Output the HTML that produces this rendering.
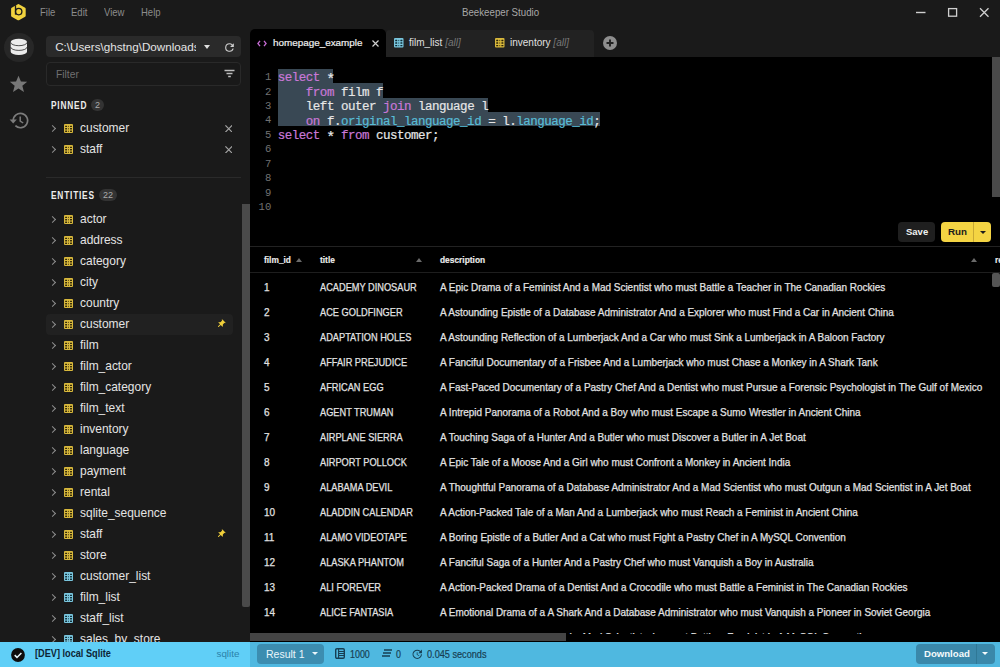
<!DOCTYPE html>
<html><head><meta charset="utf-8"><style>
*{margin:0;padding:0;box-sizing:border-box}
html,body{width:1000px;height:667px;overflow:hidden;background:#1a1a1a;font-family:"Liberation Sans",sans-serif;color:#e6e6e6}
.a{position:absolute}
.nw{white-space:nowrap}
.menu{top:7.2px;font-size:10.4px;color:#8c8c8c;position:absolute;white-space:nowrap;transform:scaleX(0.915);transform-origin:0 0}
.hdr{position:absolute;font-size:10.4px;font-weight:700;letter-spacing:1px;transform:scaleX(0.8);transform-origin:0 0;color:#ececec;white-space:nowrap}
.badge{position:absolute;background:#333;color:#aaa;border-radius:7px;font-size:9px;text-align:center;height:12px;line-height:12px}
.item{position:absolute;left:46px;width:187px;height:21px}
.chev{position:absolute;left:4px;top:8px;width:5px;height:5px;border-right:1.5px solid #8e8e8e;border-bottom:1.5px solid #8e8e8e;transform:rotate(-45deg)}
.ic{position:absolute;left:18px;top:5.5px}
.tx{position:absolute;left:34px;top:2.9px;font-size:12.4px;color:#e4e4e4;white-space:nowrap;transform:scaleX(0.965);transform-origin:0 0}
.code{position:absolute;font-family:"Liberation Mono",monospace;font-size:12.5px;letter-spacing:-0.49px;line-height:15.45px;white-space:pre}
.ln{left:250px;width:21.3px;text-align:right;color:#727272;font-size:10.6px !important;letter-spacing:0 !important}
.kw{color:#c978d8;-webkit-text-stroke:0.2px #c978d8}
.pr{color:#58bcd6;-webkit-text-stroke:0.2px #58bcd6}
.id{color:#e6e6e6;-webkit-text-stroke:0.2px #e6e6e6}
.ast{display:inline-block;transform:translateY(3px) scale(1.2)}
.sel{position:absolute;background:#394854}
.th{position:absolute;font-size:9px;font-weight:700;color:#ececec;-webkit-text-stroke:0.15px #ececec;top:8.8px;white-space:nowrap;transform:scaleX(0.93);transform-origin:0 0}
.row{position:absolute;left:0;width:750px;height:25px;font-size:10.6px;color:#e2e2e2}
.row span{position:absolute;top:7.8px;white-space:nowrap;-webkit-text-stroke:0.25px #e2e2e2;transform:scaleX(0.94);transform-origin:0 0}
.sarrow{position:absolute;width:0;height:0;border-left:3px solid transparent;border-right:3px solid transparent;border-bottom:4px solid #6a6a6a}
</style></head><body>
<div class="a" style="left:0;top:0;width:1000px;height:29px;background:#1a1a1a"></div>
<svg class="a" style="left:10px;top:4px" width="17" height="17" viewBox="0 0 17 17">
<polygon points="8.4,1.2 14.6,4.7 14.6,11.7 8.4,15.2 2.2,11.7 2.2,4.7" fill="#f0d23e" stroke="#f0d23e" stroke-width="2.2" stroke-linejoin="round"/>
<path d="M5.5 1.2 V10.6" stroke="#1a1a1a" stroke-width="1.3"/>
<circle cx="8.7" cy="7.6" r="3.2" fill="none" stroke="#1a1a1a" stroke-width="1.3"/></svg>
<div class="menu" style="left:40px">File</div>
<div class="menu" style="left:71px">Edit</div>
<div class="menu" style="left:104px">View</div>
<div class="menu" style="left:141px">Help</div>
<div class="a nw" style="left:461.8px;top:5.6px;font-size:10.6px;color:#a8a8a8;transform:scaleX(0.915);transform-origin:0 0">Beekeeper Studio</div>
<svg class="a" style="left:910px;top:4px" width="85" height="18" viewBox="0 0 85 18">
<path d="M6 8.5 H15.5" stroke="#cfcfcf" stroke-width="1.4"/>
<rect x="38.6" y="4.6" width="8" height="7.6" fill="none" stroke="#cfcfcf" stroke-width="1.3"/>
<path d="M70 4.3 L78.5 12.8 M78.5 4.3 L70 12.8" stroke="#cfcfcf" stroke-width="1.3"/></svg>
<div class="a" style="left:4px;top:32.5px;width:29.5px;height:29.5px;border-radius:50%;background:#272727"></div>
<svg class="a" style="left:10px;top:38px" width="18" height="18" viewBox="0 0 18 18">
<path d="M0.7 4 A8.15 3.3 0 0 1 17 4 V13.7 A8.15 3.3 0 0 1 0.7 13.7 Z" fill="#ececec"/>
<path d="M0.7 4.4 A8.15 3.3 0 0 0 17 4.4 M0.7 9.1 A8.15 3.3 0 0 0 17 9.1" fill="none" stroke="#262626" stroke-width="0.8"/></svg>
<svg class="a" style="left:9px;top:75px" width="19" height="18" viewBox="0 0 24 23">
<path d="M12 0.8 L15.1 8.2 L23.1 8.6 L16.9 13.8 L19 21.6 L12 17.2 L5 21.6 L7.1 13.8 L0.9 8.6 L8.9 8.2Z" fill="#777"/></svg>
<svg class="a" style="left:8px;top:111px" width="21" height="19" viewBox="0 0 21 19">
<path d="M5.2 9.5 A7.2 7.2 0 1 1 7.4 14.7" fill="none" stroke="#7c7c7c" stroke-width="1.7"/>
<path d="M1.6 8.6 L5.2 12.6 L8.8 8.6 Z" fill="#7c7c7c"/>
<path d="M12.2 5.6 V10 L15.2 12" fill="none" stroke="#7c7c7c" stroke-width="1.5"/></svg>
<div class="a" style="left:46px;top:36px;width:195px;height:21.2px;background:#2a2a2a;border-radius:4px;overflow:hidden"><div class="a nw" style="left:9.2px;top:3.7px;width:141px;overflow:hidden;font-size:11.65px;color:#e4e4e4">C:\Users\ghstng\Downloads\sakila.db</div></div>
<div class="a" style="left:204px;top:45px;width:0;height:0;border-left:3.5px solid transparent;border-right:3.5px solid transparent;border-top:4px solid #e0e0e0"></div>
<svg class="a" style="left:223px;top:40.5px" width="13" height="13" viewBox="0 0 24 24">
<path d="M17.65 6.35A7.96 7.96 0 0 0 12 4a8 8 0 1 0 7.73 10h-2.08A6 6 0 1 1 12 6c1.66 0 3.14.69 4.22 1.78L13 11h7V4l-2.35 2.35z" fill="#cfcfcf"/></svg>
<div class="a" style="left:46px;top:62px;width:195px;height:24px;border:1px solid #292929;border-radius:4px;background:#191919"></div>
<div class="a nw" style="left:56px;top:67.9px;font-size:10.8px;color:#707070;transform:scaleX(0.95);transform-origin:0 0">Filter</div>
<svg class="a" style="left:224px;top:69px" width="11" height="10" viewBox="0 0 11 10">
<path d="M0.5 1.5 H10.5 M2.5 4.5 H8.5 M4.2 7.5 H6.8" stroke="#bdbdbd" stroke-width="1.3"/></svg>
<div class="hdr" style="left:51px;top:99.9px">PINNED</div>
<div class="badge" style="left:91px;top:99px;width:13px">2</div>
<div class="item" style="top:118px"><div class="chev"></div><svg class="ic" width="9" height="10" viewBox="0 0 9 10" preserveAspectRatio="none"><rect x="0" y="0" width="9" height="9" rx="1" fill="#d8b83c"/><rect x="1.1" y="1.7" width="2.0" height="1.3" rx="0.4" fill="#2b2306"/><rect x="1.1" y="4.1" width="2.0" height="1.3" rx="0.4" fill="#2b2306"/><rect x="1.1" y="6.6" width="2.0" height="1.3" rx="0.4" fill="#2b2306"/><rect x="4.15" y="1.7" width="0.8" height="1.3" rx="0.4" fill="#2b2306"/><rect x="4.15" y="4.1" width="0.8" height="1.3" rx="0.4" fill="#2b2306"/><rect x="4.15" y="6.6" width="0.8" height="1.3" rx="0.4" fill="#2b2306"/><rect x="6.0" y="1.7" width="2.0" height="1.3" rx="0.4" fill="#2b2306"/><rect x="6.0" y="4.1" width="2.0" height="1.3" rx="0.4" fill="#2b2306"/><rect x="6.0" y="6.6" width="2.0" height="1.3" rx="0.4" fill="#2b2306"/></svg><div class="tx">customer</div><svg style="position:absolute;left:178.9px;top:6.5px" width="7.5" height="7.5" viewBox="0 0 7.5 7.5"><path d="M0.4 0.4 L7.1 7.1 M7.1 0.4 L0.4 7.1" stroke="#a4a4a4" stroke-width="1.2"/></svg></div>
<div class="item" style="top:139px"><div class="chev"></div><svg class="ic" width="9" height="10" viewBox="0 0 9 10" preserveAspectRatio="none"><rect x="0" y="0" width="9" height="9" rx="1" fill="#d8b83c"/><rect x="1.1" y="1.7" width="2.0" height="1.3" rx="0.4" fill="#2b2306"/><rect x="1.1" y="4.1" width="2.0" height="1.3" rx="0.4" fill="#2b2306"/><rect x="1.1" y="6.6" width="2.0" height="1.3" rx="0.4" fill="#2b2306"/><rect x="4.15" y="1.7" width="0.8" height="1.3" rx="0.4" fill="#2b2306"/><rect x="4.15" y="4.1" width="0.8" height="1.3" rx="0.4" fill="#2b2306"/><rect x="4.15" y="6.6" width="0.8" height="1.3" rx="0.4" fill="#2b2306"/><rect x="6.0" y="1.7" width="2.0" height="1.3" rx="0.4" fill="#2b2306"/><rect x="6.0" y="4.1" width="2.0" height="1.3" rx="0.4" fill="#2b2306"/><rect x="6.0" y="6.6" width="2.0" height="1.3" rx="0.4" fill="#2b2306"/></svg><div class="tx">staff</div><svg style="position:absolute;left:178.9px;top:6.5px" width="7.5" height="7.5" viewBox="0 0 7.5 7.5"><path d="M0.4 0.4 L7.1 7.1 M7.1 0.4 L0.4 7.1" stroke="#a4a4a4" stroke-width="1.2"/></svg></div>
<div class="a" style="left:46px;top:177px;width:195px;height:1px;background:#2a2a2a"></div>
<div class="hdr" style="left:51px;top:189.5px">ENTITIES</div>
<div class="badge" style="left:99px;top:189px;width:18px">22</div>
<div class="item" style="top:209px"><div class="chev"></div><svg class="ic" width="9" height="10" viewBox="0 0 9 10" preserveAspectRatio="none"><rect x="0" y="0" width="9" height="9" rx="1" fill="#d8b83c"/><rect x="1.1" y="1.7" width="2.0" height="1.3" rx="0.4" fill="#2b2306"/><rect x="1.1" y="4.1" width="2.0" height="1.3" rx="0.4" fill="#2b2306"/><rect x="1.1" y="6.6" width="2.0" height="1.3" rx="0.4" fill="#2b2306"/><rect x="4.15" y="1.7" width="0.8" height="1.3" rx="0.4" fill="#2b2306"/><rect x="4.15" y="4.1" width="0.8" height="1.3" rx="0.4" fill="#2b2306"/><rect x="4.15" y="6.6" width="0.8" height="1.3" rx="0.4" fill="#2b2306"/><rect x="6.0" y="1.7" width="2.0" height="1.3" rx="0.4" fill="#2b2306"/><rect x="6.0" y="4.1" width="2.0" height="1.3" rx="0.4" fill="#2b2306"/><rect x="6.0" y="6.6" width="2.0" height="1.3" rx="0.4" fill="#2b2306"/></svg><div class="tx">actor</div></div>
<div class="item" style="top:230px"><div class="chev"></div><svg class="ic" width="9" height="10" viewBox="0 0 9 10" preserveAspectRatio="none"><rect x="0" y="0" width="9" height="9" rx="1" fill="#d8b83c"/><rect x="1.1" y="1.7" width="2.0" height="1.3" rx="0.4" fill="#2b2306"/><rect x="1.1" y="4.1" width="2.0" height="1.3" rx="0.4" fill="#2b2306"/><rect x="1.1" y="6.6" width="2.0" height="1.3" rx="0.4" fill="#2b2306"/><rect x="4.15" y="1.7" width="0.8" height="1.3" rx="0.4" fill="#2b2306"/><rect x="4.15" y="4.1" width="0.8" height="1.3" rx="0.4" fill="#2b2306"/><rect x="4.15" y="6.6" width="0.8" height="1.3" rx="0.4" fill="#2b2306"/><rect x="6.0" y="1.7" width="2.0" height="1.3" rx="0.4" fill="#2b2306"/><rect x="6.0" y="4.1" width="2.0" height="1.3" rx="0.4" fill="#2b2306"/><rect x="6.0" y="6.6" width="2.0" height="1.3" rx="0.4" fill="#2b2306"/></svg><div class="tx">address</div></div>
<div class="item" style="top:251px"><div class="chev"></div><svg class="ic" width="9" height="10" viewBox="0 0 9 10" preserveAspectRatio="none"><rect x="0" y="0" width="9" height="9" rx="1" fill="#d8b83c"/><rect x="1.1" y="1.7" width="2.0" height="1.3" rx="0.4" fill="#2b2306"/><rect x="1.1" y="4.1" width="2.0" height="1.3" rx="0.4" fill="#2b2306"/><rect x="1.1" y="6.6" width="2.0" height="1.3" rx="0.4" fill="#2b2306"/><rect x="4.15" y="1.7" width="0.8" height="1.3" rx="0.4" fill="#2b2306"/><rect x="4.15" y="4.1" width="0.8" height="1.3" rx="0.4" fill="#2b2306"/><rect x="4.15" y="6.6" width="0.8" height="1.3" rx="0.4" fill="#2b2306"/><rect x="6.0" y="1.7" width="2.0" height="1.3" rx="0.4" fill="#2b2306"/><rect x="6.0" y="4.1" width="2.0" height="1.3" rx="0.4" fill="#2b2306"/><rect x="6.0" y="6.6" width="2.0" height="1.3" rx="0.4" fill="#2b2306"/></svg><div class="tx">category</div></div>
<div class="item" style="top:272px"><div class="chev"></div><svg class="ic" width="9" height="10" viewBox="0 0 9 10" preserveAspectRatio="none"><rect x="0" y="0" width="9" height="9" rx="1" fill="#d8b83c"/><rect x="1.1" y="1.7" width="2.0" height="1.3" rx="0.4" fill="#2b2306"/><rect x="1.1" y="4.1" width="2.0" height="1.3" rx="0.4" fill="#2b2306"/><rect x="1.1" y="6.6" width="2.0" height="1.3" rx="0.4" fill="#2b2306"/><rect x="4.15" y="1.7" width="0.8" height="1.3" rx="0.4" fill="#2b2306"/><rect x="4.15" y="4.1" width="0.8" height="1.3" rx="0.4" fill="#2b2306"/><rect x="4.15" y="6.6" width="0.8" height="1.3" rx="0.4" fill="#2b2306"/><rect x="6.0" y="1.7" width="2.0" height="1.3" rx="0.4" fill="#2b2306"/><rect x="6.0" y="4.1" width="2.0" height="1.3" rx="0.4" fill="#2b2306"/><rect x="6.0" y="6.6" width="2.0" height="1.3" rx="0.4" fill="#2b2306"/></svg><div class="tx">city</div></div>
<div class="item" style="top:293px"><div class="chev"></div><svg class="ic" width="9" height="10" viewBox="0 0 9 10" preserveAspectRatio="none"><rect x="0" y="0" width="9" height="9" rx="1" fill="#d8b83c"/><rect x="1.1" y="1.7" width="2.0" height="1.3" rx="0.4" fill="#2b2306"/><rect x="1.1" y="4.1" width="2.0" height="1.3" rx="0.4" fill="#2b2306"/><rect x="1.1" y="6.6" width="2.0" height="1.3" rx="0.4" fill="#2b2306"/><rect x="4.15" y="1.7" width="0.8" height="1.3" rx="0.4" fill="#2b2306"/><rect x="4.15" y="4.1" width="0.8" height="1.3" rx="0.4" fill="#2b2306"/><rect x="4.15" y="6.6" width="0.8" height="1.3" rx="0.4" fill="#2b2306"/><rect x="6.0" y="1.7" width="2.0" height="1.3" rx="0.4" fill="#2b2306"/><rect x="6.0" y="4.1" width="2.0" height="1.3" rx="0.4" fill="#2b2306"/><rect x="6.0" y="6.6" width="2.0" height="1.3" rx="0.4" fill="#2b2306"/></svg><div class="tx">country</div></div>
<div class="item" style="top:314px;background:#212121;border-radius:4px"><div class="chev"></div><svg class="ic" width="9" height="10" viewBox="0 0 9 10" preserveAspectRatio="none"><rect x="0" y="0" width="9" height="9" rx="1" fill="#d8b83c"/><rect x="1.1" y="1.7" width="2.0" height="1.3" rx="0.4" fill="#2b2306"/><rect x="1.1" y="4.1" width="2.0" height="1.3" rx="0.4" fill="#2b2306"/><rect x="1.1" y="6.6" width="2.0" height="1.3" rx="0.4" fill="#2b2306"/><rect x="4.15" y="1.7" width="0.8" height="1.3" rx="0.4" fill="#2b2306"/><rect x="4.15" y="4.1" width="0.8" height="1.3" rx="0.4" fill="#2b2306"/><rect x="4.15" y="6.6" width="0.8" height="1.3" rx="0.4" fill="#2b2306"/><rect x="6.0" y="1.7" width="2.0" height="1.3" rx="0.4" fill="#2b2306"/><rect x="6.0" y="4.1" width="2.0" height="1.3" rx="0.4" fill="#2b2306"/><rect x="6.0" y="6.6" width="2.0" height="1.3" rx="0.4" fill="#2b2306"/></svg><div class="tx">customer</div><svg style="position:absolute;left:170px;top:5px" width="10" height="10" viewBox="0 0 24 24"><path d="M16 9V4h1c.55 0 1-.45 1-1s-.45-1-1-1H7c-.55 0-1 .45-1 1s.45 1 1 1h1v5c0 1.66-1.34 3-3 3v2h5.97v7l1 1 1-1v-7H19v-2c-1.66 0-3-1.34-3-3z" fill="#f0cf3a" transform="rotate(45 12 12)"/></svg></div>
<div class="item" style="top:335px"><div class="chev"></div><svg class="ic" width="9" height="10" viewBox="0 0 9 10" preserveAspectRatio="none"><rect x="0" y="0" width="9" height="9" rx="1" fill="#d8b83c"/><rect x="1.1" y="1.7" width="2.0" height="1.3" rx="0.4" fill="#2b2306"/><rect x="1.1" y="4.1" width="2.0" height="1.3" rx="0.4" fill="#2b2306"/><rect x="1.1" y="6.6" width="2.0" height="1.3" rx="0.4" fill="#2b2306"/><rect x="4.15" y="1.7" width="0.8" height="1.3" rx="0.4" fill="#2b2306"/><rect x="4.15" y="4.1" width="0.8" height="1.3" rx="0.4" fill="#2b2306"/><rect x="4.15" y="6.6" width="0.8" height="1.3" rx="0.4" fill="#2b2306"/><rect x="6.0" y="1.7" width="2.0" height="1.3" rx="0.4" fill="#2b2306"/><rect x="6.0" y="4.1" width="2.0" height="1.3" rx="0.4" fill="#2b2306"/><rect x="6.0" y="6.6" width="2.0" height="1.3" rx="0.4" fill="#2b2306"/></svg><div class="tx">film</div></div>
<div class="item" style="top:356px"><div class="chev"></div><svg class="ic" width="9" height="10" viewBox="0 0 9 10" preserveAspectRatio="none"><rect x="0" y="0" width="9" height="9" rx="1" fill="#d8b83c"/><rect x="1.1" y="1.7" width="2.0" height="1.3" rx="0.4" fill="#2b2306"/><rect x="1.1" y="4.1" width="2.0" height="1.3" rx="0.4" fill="#2b2306"/><rect x="1.1" y="6.6" width="2.0" height="1.3" rx="0.4" fill="#2b2306"/><rect x="4.15" y="1.7" width="0.8" height="1.3" rx="0.4" fill="#2b2306"/><rect x="4.15" y="4.1" width="0.8" height="1.3" rx="0.4" fill="#2b2306"/><rect x="4.15" y="6.6" width="0.8" height="1.3" rx="0.4" fill="#2b2306"/><rect x="6.0" y="1.7" width="2.0" height="1.3" rx="0.4" fill="#2b2306"/><rect x="6.0" y="4.1" width="2.0" height="1.3" rx="0.4" fill="#2b2306"/><rect x="6.0" y="6.6" width="2.0" height="1.3" rx="0.4" fill="#2b2306"/></svg><div class="tx">film_actor</div></div>
<div class="item" style="top:377px"><div class="chev"></div><svg class="ic" width="9" height="10" viewBox="0 0 9 10" preserveAspectRatio="none"><rect x="0" y="0" width="9" height="9" rx="1" fill="#d8b83c"/><rect x="1.1" y="1.7" width="2.0" height="1.3" rx="0.4" fill="#2b2306"/><rect x="1.1" y="4.1" width="2.0" height="1.3" rx="0.4" fill="#2b2306"/><rect x="1.1" y="6.6" width="2.0" height="1.3" rx="0.4" fill="#2b2306"/><rect x="4.15" y="1.7" width="0.8" height="1.3" rx="0.4" fill="#2b2306"/><rect x="4.15" y="4.1" width="0.8" height="1.3" rx="0.4" fill="#2b2306"/><rect x="4.15" y="6.6" width="0.8" height="1.3" rx="0.4" fill="#2b2306"/><rect x="6.0" y="1.7" width="2.0" height="1.3" rx="0.4" fill="#2b2306"/><rect x="6.0" y="4.1" width="2.0" height="1.3" rx="0.4" fill="#2b2306"/><rect x="6.0" y="6.6" width="2.0" height="1.3" rx="0.4" fill="#2b2306"/></svg><div class="tx">film_category</div></div>
<div class="item" style="top:398px"><div class="chev"></div><svg class="ic" width="9" height="10" viewBox="0 0 9 10" preserveAspectRatio="none"><rect x="0" y="0" width="9" height="9" rx="1" fill="#d8b83c"/><rect x="1.1" y="1.7" width="2.0" height="1.3" rx="0.4" fill="#2b2306"/><rect x="1.1" y="4.1" width="2.0" height="1.3" rx="0.4" fill="#2b2306"/><rect x="1.1" y="6.6" width="2.0" height="1.3" rx="0.4" fill="#2b2306"/><rect x="4.15" y="1.7" width="0.8" height="1.3" rx="0.4" fill="#2b2306"/><rect x="4.15" y="4.1" width="0.8" height="1.3" rx="0.4" fill="#2b2306"/><rect x="4.15" y="6.6" width="0.8" height="1.3" rx="0.4" fill="#2b2306"/><rect x="6.0" y="1.7" width="2.0" height="1.3" rx="0.4" fill="#2b2306"/><rect x="6.0" y="4.1" width="2.0" height="1.3" rx="0.4" fill="#2b2306"/><rect x="6.0" y="6.6" width="2.0" height="1.3" rx="0.4" fill="#2b2306"/></svg><div class="tx">film_text</div></div>
<div class="item" style="top:419px"><div class="chev"></div><svg class="ic" width="9" height="10" viewBox="0 0 9 10" preserveAspectRatio="none"><rect x="0" y="0" width="9" height="9" rx="1" fill="#d8b83c"/><rect x="1.1" y="1.7" width="2.0" height="1.3" rx="0.4" fill="#2b2306"/><rect x="1.1" y="4.1" width="2.0" height="1.3" rx="0.4" fill="#2b2306"/><rect x="1.1" y="6.6" width="2.0" height="1.3" rx="0.4" fill="#2b2306"/><rect x="4.15" y="1.7" width="0.8" height="1.3" rx="0.4" fill="#2b2306"/><rect x="4.15" y="4.1" width="0.8" height="1.3" rx="0.4" fill="#2b2306"/><rect x="4.15" y="6.6" width="0.8" height="1.3" rx="0.4" fill="#2b2306"/><rect x="6.0" y="1.7" width="2.0" height="1.3" rx="0.4" fill="#2b2306"/><rect x="6.0" y="4.1" width="2.0" height="1.3" rx="0.4" fill="#2b2306"/><rect x="6.0" y="6.6" width="2.0" height="1.3" rx="0.4" fill="#2b2306"/></svg><div class="tx">inventory</div></div>
<div class="item" style="top:440px"><div class="chev"></div><svg class="ic" width="9" height="10" viewBox="0 0 9 10" preserveAspectRatio="none"><rect x="0" y="0" width="9" height="9" rx="1" fill="#d8b83c"/><rect x="1.1" y="1.7" width="2.0" height="1.3" rx="0.4" fill="#2b2306"/><rect x="1.1" y="4.1" width="2.0" height="1.3" rx="0.4" fill="#2b2306"/><rect x="1.1" y="6.6" width="2.0" height="1.3" rx="0.4" fill="#2b2306"/><rect x="4.15" y="1.7" width="0.8" height="1.3" rx="0.4" fill="#2b2306"/><rect x="4.15" y="4.1" width="0.8" height="1.3" rx="0.4" fill="#2b2306"/><rect x="4.15" y="6.6" width="0.8" height="1.3" rx="0.4" fill="#2b2306"/><rect x="6.0" y="1.7" width="2.0" height="1.3" rx="0.4" fill="#2b2306"/><rect x="6.0" y="4.1" width="2.0" height="1.3" rx="0.4" fill="#2b2306"/><rect x="6.0" y="6.6" width="2.0" height="1.3" rx="0.4" fill="#2b2306"/></svg><div class="tx">language</div></div>
<div class="item" style="top:461px"><div class="chev"></div><svg class="ic" width="9" height="10" viewBox="0 0 9 10" preserveAspectRatio="none"><rect x="0" y="0" width="9" height="9" rx="1" fill="#d8b83c"/><rect x="1.1" y="1.7" width="2.0" height="1.3" rx="0.4" fill="#2b2306"/><rect x="1.1" y="4.1" width="2.0" height="1.3" rx="0.4" fill="#2b2306"/><rect x="1.1" y="6.6" width="2.0" height="1.3" rx="0.4" fill="#2b2306"/><rect x="4.15" y="1.7" width="0.8" height="1.3" rx="0.4" fill="#2b2306"/><rect x="4.15" y="4.1" width="0.8" height="1.3" rx="0.4" fill="#2b2306"/><rect x="4.15" y="6.6" width="0.8" height="1.3" rx="0.4" fill="#2b2306"/><rect x="6.0" y="1.7" width="2.0" height="1.3" rx="0.4" fill="#2b2306"/><rect x="6.0" y="4.1" width="2.0" height="1.3" rx="0.4" fill="#2b2306"/><rect x="6.0" y="6.6" width="2.0" height="1.3" rx="0.4" fill="#2b2306"/></svg><div class="tx">payment</div></div>
<div class="item" style="top:482px"><div class="chev"></div><svg class="ic" width="9" height="10" viewBox="0 0 9 10" preserveAspectRatio="none"><rect x="0" y="0" width="9" height="9" rx="1" fill="#d8b83c"/><rect x="1.1" y="1.7" width="2.0" height="1.3" rx="0.4" fill="#2b2306"/><rect x="1.1" y="4.1" width="2.0" height="1.3" rx="0.4" fill="#2b2306"/><rect x="1.1" y="6.6" width="2.0" height="1.3" rx="0.4" fill="#2b2306"/><rect x="4.15" y="1.7" width="0.8" height="1.3" rx="0.4" fill="#2b2306"/><rect x="4.15" y="4.1" width="0.8" height="1.3" rx="0.4" fill="#2b2306"/><rect x="4.15" y="6.6" width="0.8" height="1.3" rx="0.4" fill="#2b2306"/><rect x="6.0" y="1.7" width="2.0" height="1.3" rx="0.4" fill="#2b2306"/><rect x="6.0" y="4.1" width="2.0" height="1.3" rx="0.4" fill="#2b2306"/><rect x="6.0" y="6.6" width="2.0" height="1.3" rx="0.4" fill="#2b2306"/></svg><div class="tx">rental</div></div>
<div class="item" style="top:503px"><div class="chev"></div><svg class="ic" width="9" height="10" viewBox="0 0 9 10" preserveAspectRatio="none"><rect x="0" y="0" width="9" height="9" rx="1" fill="#d8b83c"/><rect x="1.1" y="1.7" width="2.0" height="1.3" rx="0.4" fill="#2b2306"/><rect x="1.1" y="4.1" width="2.0" height="1.3" rx="0.4" fill="#2b2306"/><rect x="1.1" y="6.6" width="2.0" height="1.3" rx="0.4" fill="#2b2306"/><rect x="4.15" y="1.7" width="0.8" height="1.3" rx="0.4" fill="#2b2306"/><rect x="4.15" y="4.1" width="0.8" height="1.3" rx="0.4" fill="#2b2306"/><rect x="4.15" y="6.6" width="0.8" height="1.3" rx="0.4" fill="#2b2306"/><rect x="6.0" y="1.7" width="2.0" height="1.3" rx="0.4" fill="#2b2306"/><rect x="6.0" y="4.1" width="2.0" height="1.3" rx="0.4" fill="#2b2306"/><rect x="6.0" y="6.6" width="2.0" height="1.3" rx="0.4" fill="#2b2306"/></svg><div class="tx">sqlite_sequence</div></div>
<div class="item" style="top:524px"><div class="chev"></div><svg class="ic" width="9" height="10" viewBox="0 0 9 10" preserveAspectRatio="none"><rect x="0" y="0" width="9" height="9" rx="1" fill="#d8b83c"/><rect x="1.1" y="1.7" width="2.0" height="1.3" rx="0.4" fill="#2b2306"/><rect x="1.1" y="4.1" width="2.0" height="1.3" rx="0.4" fill="#2b2306"/><rect x="1.1" y="6.6" width="2.0" height="1.3" rx="0.4" fill="#2b2306"/><rect x="4.15" y="1.7" width="0.8" height="1.3" rx="0.4" fill="#2b2306"/><rect x="4.15" y="4.1" width="0.8" height="1.3" rx="0.4" fill="#2b2306"/><rect x="4.15" y="6.6" width="0.8" height="1.3" rx="0.4" fill="#2b2306"/><rect x="6.0" y="1.7" width="2.0" height="1.3" rx="0.4" fill="#2b2306"/><rect x="6.0" y="4.1" width="2.0" height="1.3" rx="0.4" fill="#2b2306"/><rect x="6.0" y="6.6" width="2.0" height="1.3" rx="0.4" fill="#2b2306"/></svg><div class="tx">staff</div><svg style="position:absolute;left:170px;top:5px" width="10" height="10" viewBox="0 0 24 24"><path d="M16 9V4h1c.55 0 1-.45 1-1s-.45-1-1-1H7c-.55 0-1 .45-1 1s.45 1 1 1h1v5c0 1.66-1.34 3-3 3v2h5.97v7l1 1 1-1v-7H19v-2c-1.66 0-3-1.34-3-3z" fill="#f0cf3a" transform="rotate(45 12 12)"/></svg></div>
<div class="item" style="top:545px"><div class="chev"></div><svg class="ic" width="9" height="10" viewBox="0 0 9 10" preserveAspectRatio="none"><rect x="0" y="0" width="9" height="9" rx="1" fill="#d8b83c"/><rect x="1.1" y="1.7" width="2.0" height="1.3" rx="0.4" fill="#2b2306"/><rect x="1.1" y="4.1" width="2.0" height="1.3" rx="0.4" fill="#2b2306"/><rect x="1.1" y="6.6" width="2.0" height="1.3" rx="0.4" fill="#2b2306"/><rect x="4.15" y="1.7" width="0.8" height="1.3" rx="0.4" fill="#2b2306"/><rect x="4.15" y="4.1" width="0.8" height="1.3" rx="0.4" fill="#2b2306"/><rect x="4.15" y="6.6" width="0.8" height="1.3" rx="0.4" fill="#2b2306"/><rect x="6.0" y="1.7" width="2.0" height="1.3" rx="0.4" fill="#2b2306"/><rect x="6.0" y="4.1" width="2.0" height="1.3" rx="0.4" fill="#2b2306"/><rect x="6.0" y="6.6" width="2.0" height="1.3" rx="0.4" fill="#2b2306"/></svg><div class="tx">store</div></div>
<div class="item" style="top:566px"><div class="chev"></div><svg class="ic" width="9" height="10" viewBox="0 0 9 10" preserveAspectRatio="none"><rect x="0" y="0" width="9" height="9" rx="1" fill="#79c5dd"/><rect x="1.1" y="1.7" width="2.0" height="1.3" rx="0.4" fill="#0d2a33"/><rect x="1.1" y="4.1" width="2.0" height="1.3" rx="0.4" fill="#0d2a33"/><rect x="1.1" y="6.6" width="2.0" height="1.3" rx="0.4" fill="#0d2a33"/><rect x="4.15" y="1.7" width="0.8" height="1.3" rx="0.4" fill="#0d2a33"/><rect x="4.15" y="4.1" width="0.8" height="1.3" rx="0.4" fill="#0d2a33"/><rect x="4.15" y="6.6" width="0.8" height="1.3" rx="0.4" fill="#0d2a33"/><rect x="6.0" y="1.7" width="2.0" height="1.3" rx="0.4" fill="#0d2a33"/><rect x="6.0" y="4.1" width="2.0" height="1.3" rx="0.4" fill="#0d2a33"/><rect x="6.0" y="6.6" width="2.0" height="1.3" rx="0.4" fill="#0d2a33"/></svg><div class="tx">customer_list</div></div>
<div class="item" style="top:587px"><div class="chev"></div><svg class="ic" width="9" height="10" viewBox="0 0 9 10" preserveAspectRatio="none"><rect x="0" y="0" width="9" height="9" rx="1" fill="#79c5dd"/><rect x="1.1" y="1.7" width="2.0" height="1.3" rx="0.4" fill="#0d2a33"/><rect x="1.1" y="4.1" width="2.0" height="1.3" rx="0.4" fill="#0d2a33"/><rect x="1.1" y="6.6" width="2.0" height="1.3" rx="0.4" fill="#0d2a33"/><rect x="4.15" y="1.7" width="0.8" height="1.3" rx="0.4" fill="#0d2a33"/><rect x="4.15" y="4.1" width="0.8" height="1.3" rx="0.4" fill="#0d2a33"/><rect x="4.15" y="6.6" width="0.8" height="1.3" rx="0.4" fill="#0d2a33"/><rect x="6.0" y="1.7" width="2.0" height="1.3" rx="0.4" fill="#0d2a33"/><rect x="6.0" y="4.1" width="2.0" height="1.3" rx="0.4" fill="#0d2a33"/><rect x="6.0" y="6.6" width="2.0" height="1.3" rx="0.4" fill="#0d2a33"/></svg><div class="tx">film_list</div></div>
<div class="item" style="top:608px"><div class="chev"></div><svg class="ic" width="9" height="10" viewBox="0 0 9 10" preserveAspectRatio="none"><rect x="0" y="0" width="9" height="9" rx="1" fill="#79c5dd"/><rect x="1.1" y="1.7" width="2.0" height="1.3" rx="0.4" fill="#0d2a33"/><rect x="1.1" y="4.1" width="2.0" height="1.3" rx="0.4" fill="#0d2a33"/><rect x="1.1" y="6.6" width="2.0" height="1.3" rx="0.4" fill="#0d2a33"/><rect x="4.15" y="1.7" width="0.8" height="1.3" rx="0.4" fill="#0d2a33"/><rect x="4.15" y="4.1" width="0.8" height="1.3" rx="0.4" fill="#0d2a33"/><rect x="4.15" y="6.6" width="0.8" height="1.3" rx="0.4" fill="#0d2a33"/><rect x="6.0" y="1.7" width="2.0" height="1.3" rx="0.4" fill="#0d2a33"/><rect x="6.0" y="4.1" width="2.0" height="1.3" rx="0.4" fill="#0d2a33"/><rect x="6.0" y="6.6" width="2.0" height="1.3" rx="0.4" fill="#0d2a33"/></svg><div class="tx">staff_list</div></div>
<div class="item" style="top:629px"><div class="chev"></div><svg class="ic" width="9" height="10" viewBox="0 0 9 10" preserveAspectRatio="none"><rect x="0" y="0" width="9" height="9" rx="1" fill="#79c5dd"/><rect x="1.1" y="1.7" width="2.0" height="1.3" rx="0.4" fill="#0d2a33"/><rect x="1.1" y="4.1" width="2.0" height="1.3" rx="0.4" fill="#0d2a33"/><rect x="1.1" y="6.6" width="2.0" height="1.3" rx="0.4" fill="#0d2a33"/><rect x="4.15" y="1.7" width="0.8" height="1.3" rx="0.4" fill="#0d2a33"/><rect x="4.15" y="4.1" width="0.8" height="1.3" rx="0.4" fill="#0d2a33"/><rect x="4.15" y="6.6" width="0.8" height="1.3" rx="0.4" fill="#0d2a33"/><rect x="6.0" y="1.7" width="2.0" height="1.3" rx="0.4" fill="#0d2a33"/><rect x="6.0" y="4.1" width="2.0" height="1.3" rx="0.4" fill="#0d2a33"/><rect x="6.0" y="6.6" width="2.0" height="1.3" rx="0.4" fill="#0d2a33"/></svg><div class="tx">sales_by_store</div></div>
<div class="a" style="left:242px;top:204px;width:8px;height:402.5px;background:#4a4a4a;border-radius:0 0 2px 2px"></div>
<div class="a" style="left:250px;top:29px;width:136px;height:28px;background:#000;border-radius:5px 5px 0 0"></div>
<svg class="a" style="left:257px;top:39.5px" width="10" height="7" viewBox="0 0 10 7"><path d="M3 0.8 L0.9 3.5 L3 6.2 M7 0.8 L9.1 3.5 L7 6.2" fill="none" stroke="#c56bd3" stroke-width="1.3"/></svg>
<div class="a nw" style="left:273px;top:37px;font-size:9.9px;color:#f0f0f0;-webkit-text-stroke:0.2px #f0f0f0">homepage_example</div>
<svg class="a" style="left:372px;top:39.5px" width="7" height="7" viewBox="0 0 7 7"><path d="M0.5 0.5 L6.5 6.5 M6.5 0.5 L0.5 6.5" stroke="#cfcfcf" stroke-width="1.2"/></svg>
<div class="a" style="left:386px;top:29.6px;width:208px;height:27.4px;background:#222;border-radius:4px 4px 0 0"></div>
<div class="a" style="left:375px;top:37.7px"><svg style="position:absolute;left:19px;top:0;width:9.5px;height:10.5px" width="9" height="10" viewBox="0 0 9 10" preserveAspectRatio="none"><rect x="0" y="0" width="9" height="9" rx="1" fill="#79c5dd"/><rect x="1.1" y="1.7" width="2.0" height="1.3" rx="0.4" fill="#0d2a33"/><rect x="1.1" y="4.1" width="2.0" height="1.3" rx="0.4" fill="#0d2a33"/><rect x="1.1" y="6.6" width="2.0" height="1.3" rx="0.4" fill="#0d2a33"/><rect x="4.15" y="1.7" width="0.8" height="1.3" rx="0.4" fill="#0d2a33"/><rect x="4.15" y="4.1" width="0.8" height="1.3" rx="0.4" fill="#0d2a33"/><rect x="4.15" y="6.6" width="0.8" height="1.3" rx="0.4" fill="#0d2a33"/><rect x="6.0" y="1.7" width="2.0" height="1.3" rx="0.4" fill="#0d2a33"/><rect x="6.0" y="4.1" width="2.0" height="1.3" rx="0.4" fill="#0d2a33"/><rect x="6.0" y="6.6" width="2.0" height="1.3" rx="0.4" fill="#0d2a33"/></svg></div>
<div class="a nw" style="left:409px;top:37px;font-size:10px;color:#e0e0e0">film_list <i style="color:#777">[all]</i></div>
<div class="a" style="left:476px;top:37.7px"><svg style="position:absolute;left:19px;top:0;width:9.5px;height:10.5px" width="9" height="10" viewBox="0 0 9 10" preserveAspectRatio="none"><rect x="0" y="0" width="9" height="9" rx="1" fill="#d8b83c"/><rect x="1.1" y="1.7" width="2.0" height="1.3" rx="0.4" fill="#2b2306"/><rect x="1.1" y="4.1" width="2.0" height="1.3" rx="0.4" fill="#2b2306"/><rect x="1.1" y="6.6" width="2.0" height="1.3" rx="0.4" fill="#2b2306"/><rect x="4.15" y="1.7" width="0.8" height="1.3" rx="0.4" fill="#2b2306"/><rect x="4.15" y="4.1" width="0.8" height="1.3" rx="0.4" fill="#2b2306"/><rect x="4.15" y="6.6" width="0.8" height="1.3" rx="0.4" fill="#2b2306"/><rect x="6.0" y="1.7" width="2.0" height="1.3" rx="0.4" fill="#2b2306"/><rect x="6.0" y="4.1" width="2.0" height="1.3" rx="0.4" fill="#2b2306"/><rect x="6.0" y="6.6" width="2.0" height="1.3" rx="0.4" fill="#2b2306"/></svg></div>
<div class="a nw" style="left:510px;top:37px;font-size:10px;color:#e0e0e0">inventory <i style="color:#777">[all]</i></div>
<div class="a" style="left:603px;top:36px;width:14px;height:14px;border-radius:50%;background:#8e8e8e"></div>
<svg class="a" style="left:603px;top:36px" width="14" height="14" viewBox="0 0 14 14"><path d="M7 3.5 V10.5 M3.5 7 H10.5" stroke="#222" stroke-width="1.9"/></svg>
<div class="a" style="left:250px;top:57px;width:750px;height:189px;background:#000"></div>
<div class="sel" style="left:278px;top:68.60px;width:55.4px;height:14.55px"></div>
<div class="sel" style="left:278px;top:83.05px;width:105.0px;height:14.55px"></div>
<div class="sel" style="left:278px;top:97.50px;width:210.0px;height:14.55px"></div>
<div class="sel" style="left:278px;top:111.95px;width:322.0px;height:14.55px"></div>
<div class="code ln" style="top:70.10px">1</div>
<div class="code" style="left:277.8px;top:71.40px"><span class="kw">select</span> <span class="id ast">*</span></div>
<div class="code ln" style="top:84.55px">2</div>
<div class="code" style="left:277.8px;top:85.85px">    <span class="kw">from</span> <span class="id">film f</span></div>
<div class="code ln" style="top:99.00px">3</div>
<div class="code" style="left:277.8px;top:100.30px">    <span class="id">left outer</span> <span class="kw">join</span> <span class="id">language l</span></div>
<div class="code ln" style="top:113.45px">4</div>
<div class="code" style="left:277.8px;top:114.75px">    <span class="kw">on</span> <span class="id">f.</span><span class="pr">original_language_id</span> <span class="id">=</span> <span class="id">l.</span><span class="pr">language_id</span><span class="id">;</span></div>
<div class="code ln" style="top:127.90px">5</div>
<div class="code" style="left:277.8px;top:129.20px"><span class="kw">select</span> <span class="id ast">*</span> <span class="kw">from</span> <span class="id">customer;</span></div>
<div class="code ln" style="top:142.35px">6</div>
<div class="code ln" style="top:156.80px">7</div>
<div class="code ln" style="top:171.25px">8</div>
<div class="code ln" style="top:185.70px">9</div>
<div class="code ln" style="top:200.15px">10</div>
<div class="a" style="left:992px;top:57px;width:8px;height:140px;background:#4a4a4a"></div>
<div class="a" style="left:898px;top:222px;width:37px;height:20px;background:#1f1f1f;border-radius:4px"></div>
<div class="a nw" style="left:906px;top:226px;font-size:9.5px;font-weight:700;color:#f2f2f2">Save</div>
<div class="a" style="left:941px;top:222px;width:50px;height:20px;background:#f4d443;border-radius:4px"></div>
<div class="a" style="left:973px;top:222px;width:1px;height:20px;background:#c9a933"></div>
<div class="a nw" style="left:948px;top:226px;font-size:9.8px;font-weight:700;color:#1c1c1c">Run</div>
<div class="a" style="left:979.5px;top:230.5px;width:0;height:0;border-left:3px solid transparent;border-right:3px solid transparent;border-top:3.5px solid #1c1c1c"></div>
<div class="a" style="left:250px;top:246px;width:750px;height:396px;background:#000;overflow:hidden">
<div class="a" style="left:0;top:0;width:750px;height:1px;background:#222"></div>
<div class="a" style="left:0;top:26px;width:750px;height:1px;background:#1e1e1e"></div>
<div class="th" style="left:14px">film_id</div>
<div class="sarrow" style="left:46px;top:12px"></div>
<div class="th" style="left:69.5px">title</div>
<div class="sarrow" style="left:166px;top:12px"></div>
<div class="th" style="left:190px">description</div>
<div class="sarrow" style="left:721px;top:12px"></div>
<div class="th" style="left:745px">rental_rate</div>
<div class="row" style="top:27px"><span style="left:14px">1</span><span style="left:69.5px;transform:scaleX(0.871)">ACADEMY DINOSAUR</span><span style="left:190px">A Epic Drama of a Feminist And a Mad Scientist who must Battle a Teacher in The Canadian Rockies</span></div>
<div class="row" style="top:52px"><span style="left:14px">2</span><span style="left:69.5px;transform:scaleX(0.871)">ACE GOLDFINGER</span><span style="left:190px">A Astounding Epistle of a Database Administrator And a Explorer who must Find a Car in Ancient China</span></div>
<div class="row" style="top:77px"><span style="left:14px">3</span><span style="left:69.5px;transform:scaleX(0.871)">ADAPTATION HOLES</span><span style="left:190px">A Astounding Reflection of a Lumberjack And a Car who must Sink a Lumberjack in A Baloon Factory</span></div>
<div class="row" style="top:102px"><span style="left:14px">4</span><span style="left:69.5px;transform:scaleX(0.871)">AFFAIR PREJUDICE</span><span style="left:190px">A Fanciful Documentary of a Frisbee And a Lumberjack who must Chase a Monkey in A Shark Tank</span></div>
<div class="row" style="top:127px"><span style="left:14px">5</span><span style="left:69.5px;transform:scaleX(0.871)">AFRICAN EGG</span><span style="left:190px">A Fast-Paced Documentary of a Pastry Chef And a Dentist who must Pursue a Forensic Psychologist in The Gulf of Mexico</span></div>
<div class="row" style="top:152px"><span style="left:14px">6</span><span style="left:69.5px;transform:scaleX(0.871)">AGENT TRUMAN</span><span style="left:190px">A Intrepid Panorama of a Robot And a Boy who must Escape a Sumo Wrestler in Ancient China</span></div>
<div class="row" style="top:177px"><span style="left:14px">7</span><span style="left:69.5px;transform:scaleX(0.871)">AIRPLANE SIERRA</span><span style="left:190px">A Touching Saga of a Hunter And a Butler who must Discover a Butler in A Jet Boat</span></div>
<div class="row" style="top:202px"><span style="left:14px">8</span><span style="left:69.5px;transform:scaleX(0.871)">AIRPORT POLLOCK</span><span style="left:190px">A Epic Tale of a Moose And a Girl who must Confront a Monkey in Ancient India</span></div>
<div class="row" style="top:227px"><span style="left:14px">9</span><span style="left:69.5px;transform:scaleX(0.871)">ALABAMA DEVIL</span><span style="left:190px">A Thoughtful Panorama of a Database Administrator And a Mad Scientist who must Outgun a Mad Scientist in A Jet Boat</span></div>
<div class="row" style="top:252px"><span style="left:14px">10</span><span style="left:69.5px;transform:scaleX(0.871)">ALADDIN CALENDAR</span><span style="left:190px">A Action-Packed Tale of a Man And a Lumberjack who must Reach a Feminist in Ancient China</span></div>
<div class="row" style="top:277px"><span style="left:14px">11</span><span style="left:69.5px;transform:scaleX(0.871)">ALAMO VIDEOTAPE</span><span style="left:190px">A Boring Epistle of a Butler And a Cat who must Fight a Pastry Chef in A MySQL Convention</span></div>
<div class="row" style="top:302px"><span style="left:14px">12</span><span style="left:69.5px;transform:scaleX(0.871)">ALASKA PHANTOM</span><span style="left:190px">A Fanciful Saga of a Hunter And a Pastry Chef who must Vanquish a Boy in Australia</span></div>
<div class="row" style="top:327px"><span style="left:14px">13</span><span style="left:69.5px;transform:scaleX(0.871)">ALI FOREVER</span><span style="left:190px">A Action-Packed Drama of a Dentist And a Crocodile who must Battle a Feminist in The Canadian Rockies</span></div>
<div class="row" style="top:352px"><span style="left:14px">14</span><span style="left:69.5px;transform:scaleX(0.871)">ALICE FANTASIA</span><span style="left:190px">A Emotional Drama of a A Shark And a Database Administrator who must Vanquish a Pioneer in Soviet Georgia</span></div>
<div class="row" style="top:377px"><span style="left:14px">15</span><span style="left:69.5px;transform:scaleX(0.871)">ALIEN CENTER</span><span style="left:190px">A Brilliant Drama of a Cat And a Mad Scientist who must Battle a Feminist in A MySQL Convention</span></div>
</div>
<div class="a" style="left:250px;top:634px;width:750px;height:8px;background:#000"></div>
<div class="a" style="left:250px;top:633px;width:316px;height:8px;background:#444"></div>
<div class="a" style="left:992px;top:273px;width:8px;height:14px;background:#555;border-radius:2px"></div>
<div class="a" style="left:0;top:642px;width:1000px;height:25px;background:#4fb8e0"></div>
<div class="a" style="left:0;top:642px;width:250px;height:25px;background:#60cff7"></div>
<svg class="a" style="left:11px;top:648px" width="14" height="14" viewBox="0 0 14 14">
<circle cx="7" cy="7" r="6.9" fill="#0e0e0e"/><path d="M3.7 7.1 L6 9.4 L10.4 4.9" fill="none" stroke="#e6f7fc" stroke-width="1.5"/></svg>
<div class="a nw" style="left:34.8px;top:648px;font-size:10.3px;font-weight:700;color:#0d2535;transform:scaleX(0.89);transform-origin:0 0">[DEV] local Sqlite</div>
<div class="a nw" style="left:216.5px;top:648.2px;font-size:9.8px;color:#2b82aa">sqlite</div>
<div class="a" style="left:257px;top:644px;width:67px;height:20px;background:#3c8db0;border-radius:4px"></div>
<div class="a nw" style="left:266px;top:648px;font-size:10.5px;color:#eaf6fb">Result 1</div>
<div class="a" style="left:312px;top:652px;width:0;height:0;border-left:3.2px solid transparent;border-right:3.2px solid transparent;border-top:3.8px solid #eaf6fb"></div>
<svg class="a" style="left:335px;top:648px" width="10" height="11" viewBox="0 0 10 11">
<rect x="0.7" y="0.7" width="8.6" height="9.6" rx="1.2" fill="none" stroke="#173f53" stroke-width="1.4"/>
<path d="M4 3.5 H9.3 M4 5.5 H9.3 M4 7.5 H9.3 M3.6 0.6 V10.4" stroke="#173f53" stroke-width="1.1"/></svg>
<div class="a nw" style="left:350.3px;top:648.7px;font-size:10px;color:#173f53;-webkit-text-stroke:0.2px #173f53;transform:scaleX(0.89);transform-origin:0 0">1000</div>
<svg class="a" style="left:382px;top:649px" width="10" height="9" viewBox="0 0 10 9">
<path d="M2 1 H10 M1 4 H9 M0 7 H8" stroke="#173f53" stroke-width="1.3"/></svg>
<div class="a nw" style="left:396.2px;top:648.7px;font-size:10px;color:#173f53;-webkit-text-stroke:0.2px #173f53;transform:scaleX(0.89);transform-origin:0 0">0</div>
<svg class="a" style="left:411px;top:647.5px" width="12.5" height="12.5" viewBox="0 0 24 24">
<path d="M21 10.12h-6.78l2.74-2.82c-2.73-2.7-7.15-2.8-9.88-.1a6.875 6.875 0 0 0 0 9.79 7.02 7.02 0 0 0 9.88 0C18.32 15.65 19 14.08 19 12.1h2c0 1.98-.88 4.55-2.64 6.29-3.51 3.48-9.21 3.48-12.72 0-3.5-3.47-3.53-9.11-.02-12.58a8.987 8.987 0 0 1 12.65 0L21 3v7.12zM12.5 8v4.25l3.5 2.08-.72 1.21L11 13V8h1.5z" fill="#173f53"/></svg>
<div class="a nw" style="left:426.5px;top:648.7px;font-size:10px;color:#173f53;-webkit-text-stroke:0.2px #173f53;transform:scaleX(0.915);transform-origin:0 0">0.045 seconds</div>
<div class="a" style="left:916px;top:644px;width:79px;height:20px;background:#3a88aa;border-radius:4px"></div>
<div class="a" style="left:976px;top:644px;width:1px;height:20px;background:#2f7896"></div>
<div class="a nw" style="left:924px;top:648px;font-size:9.6px;font-weight:700;color:#f4fafc">Download</div>
<div class="a" style="left:982px;top:652px;width:0;height:0;border-left:3.2px solid transparent;border-right:3.2px solid transparent;border-top:3.8px solid #f4fafc"></div>
</body></html>
